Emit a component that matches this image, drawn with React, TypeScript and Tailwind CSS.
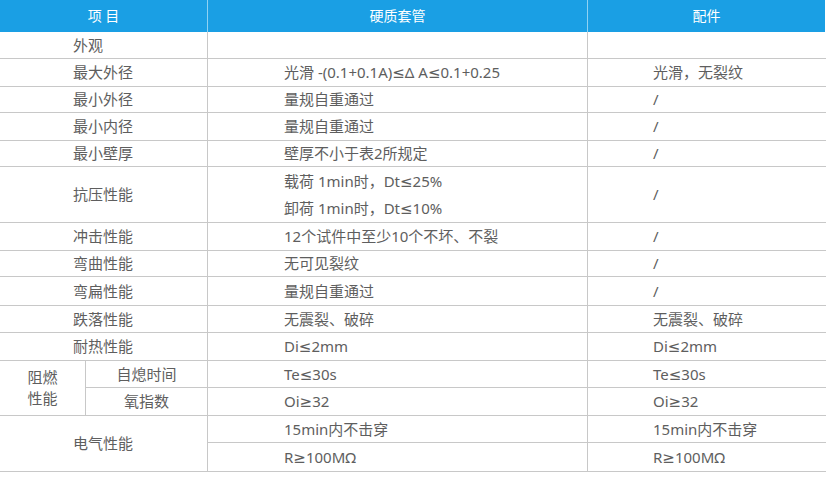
import React from 'react'

const font = { fontFamily: '"Noto Sans", "DejaVu Sans", "Noto Sans CJK SC", sans-serif' }

const simpleRows: [string, string, string, string][] = [
  ['外观', '', '', 'h-[27px]'],
  ['最大外径', '光滑 -(0.1+0.1A)≤Δ A≤0.1+0.25', '光滑，无裂纹', 'h-[28px]'],
  ['最小外径', '量规自重通过', '/', 'h-[26px]'],
  ['最小内径', '量规自重通过', '/', 'h-[28px]'],
  ['最小壁厚', '壁厚不小于表2所规定', '/', 'h-[26px]'],
]

const simpleRows2: [string, string, string, string][] = [
  ['冲击性能', '12个试件中至少10个不坏、不裂', '/', 'h-[28px]'],
  ['弯曲性能', '无可见裂纹', '/', 'h-[26px]'],
  ['弯扁性能', '量规自重通过', '/', 'h-[29px]'],
  ['跌落性能', '无震裂、破碎', '无震裂、破碎', 'h-[27px]'],
  ['耐热性能', 'Di≤2mm', 'Di≤2mm', 'h-[28px]'],
]

const line = 'border-b border-[#c8c8c8]'

function Row({ r }: { r: [string, string, string, string] }) {
  return (
    <>
      <div className={`col-span-2 flex items-center pl-[73px] border-r ${line} ${r[3]}`}>{r[0]}</div>
      <div className={`flex items-center pl-[76px] border-r ${line}`}>{r[1]}</div>
      <div className={`flex items-center pl-[65px] ${line}`}>{r[2]}</div>
    </>
  )
}

export default function App() {
  return (
    <div className="w-[829px] h-[477px] bg-white text-[15px] text-[#5e5e5e]" style={font}>
      <div className="grid grid-cols-[86px_122px_380px_238px] leading-none">
        <div className="col-span-2 h-[32px] bg-[#1a9fe4] text-white text-[14px] flex items-center justify-center border-r border-[#8fd2f3]">项 目</div>
        <div className="h-[32px] bg-[#1a9fe4] text-white text-[14px] flex items-center justify-center border-r border-[#8fd2f3]">硬质套管</div>
        <div className="h-[32px] bg-[#1a9fe4] text-white text-[14px] flex items-center justify-center mr-[1px]">配件</div>

        {simpleRows.map(r => <Row key={r[0]} r={r} />)}

        <div className={`col-span-2 h-[56px] flex items-center pl-[73px] border-r ${line}`}>抗压性能</div>
        <div className={`flex flex-col justify-center gap-[12px] pl-[76px] border-r ${line}`}>
          <span>载荷 1min时，Dt≤25%</span>
          <span>卸荷 1min时，Dt≤10%</span>
        </div>
        <div className={`flex items-center pl-[65px] ${line}`}>/</div>

        {simpleRows2.map(r => <Row key={r[0]} r={r} />)}

        <div className={`row-span-2 flex flex-col items-center justify-center gap-[6px] border-r ${line}`}>
          <span>阻燃</span>
          <span>性能</span>
        </div>
        <div className={`h-[27px] flex items-center justify-center border-r ${line}`}>自熄时间</div>
        <div className={`flex items-center pl-[76px] border-r ${line}`}>Te≤30s</div>
        <div className={`flex items-center pl-[65px] ${line}`}>Te≤30s</div>
        <div className={`h-[28px] flex items-center justify-center border-r ${line}`}>氧指数</div>
        <div className={`flex items-center pl-[76px] border-r ${line}`}>Oi≥32</div>
        <div className={`flex items-center pl-[65px] ${line}`}>Oi≥32</div>

        <div className={`col-span-2 row-span-2 flex items-center pl-[73px] border-r ${line}`}>电气性能</div>
        <div className={`h-[27px] flex items-center pl-[76px] border-r ${line}`}>15min内不击穿</div>
        <div className={`flex items-center pl-[65px] ${line}`}>15min内不击穿</div>
        <div className={`h-[29px] flex items-center pl-[76px] border-r ${line}`}>R≥100MΩ</div>
        <div className={`flex items-center pl-[65px] ${line}`}>R≥100MΩ</div>
      </div>
    </div>
  )
}
